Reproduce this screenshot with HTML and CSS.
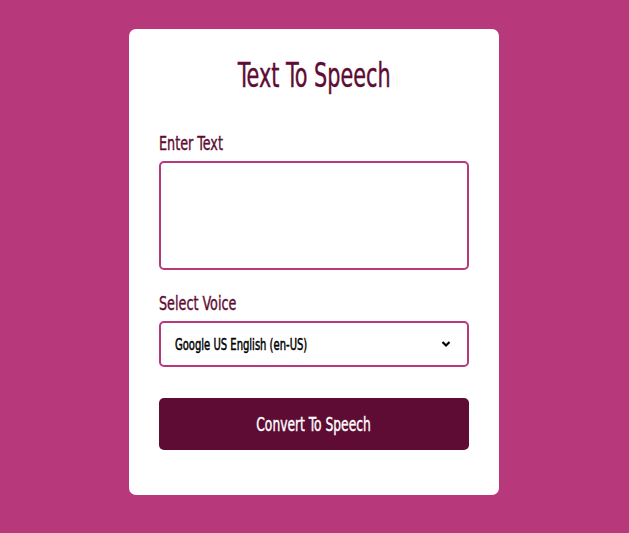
FILE: index.html
```html
<!DOCTYPE html>
<html>
<head>
<meta charset="utf-8">
<link rel="stylesheet" href="styles.css">
</head>
<body>
<div class="card">
  <h1 class="title"><span class="cond cond-center">Text To Speech</span></h1>
  <label class="label"><span class="cond">Enter Text</span></label>
  <textarea class="text"></textarea>
  <label class="label label-voice"><span class="cond">Select Voice</span></label>
  <div class="select">
    <span class="cond cond-select">Google US English (en-US)</span>
    <svg width="10" height="8" viewBox="0 0 10 8"><path d="M1.5 2 L5 5.5 L8.5 2" fill="none" stroke="#000" stroke-width="2.2"/></svg>
  </div>
  <button class="btn"><span class="cond cond-center">Convert To Speech</span></button>
</div>
</body>
</html>
```
FILE: styles.css
```css
html, body { margin: 0; padding: 0; }
body {
  background: #b8397b;
  height: 533px;
  font-family: "DejaVu Sans Condensed", "DejaVu Sans", sans-serif;
}
.cond {
  display: inline-block;
  white-space: nowrap;
  transform: scaleX(0.71);
  transform-origin: left center;
  -webkit-text-stroke: 0.4px currentColor;
}
.cond-center { transform-origin: center center; }
.cond-select { transform: scaleX(0.695); -webkit-text-stroke: 0.5px currentColor; }
.card {
  box-sizing: border-box;
  width: 370px;
  height: 466px;
  margin: 29px 0 0 129px;
  background: #fff;
  border-radius: 7px;
  padding: 30px 30px 0 30px;
  display: flex;
  flex-direction: column;
}
.title {
  margin: 0;
  text-align: center;
  font-weight: normal;
  font-size: 33px;
  line-height: 34px;
  color: #5e0c33;
}
.title .cond { transform: scaleX(0.70); }
.label {
  margin-top: 39px;
  font-size: 20px;
  line-height: 22px;
  color: #5e0c33;
}
.label-voice { margin-top: 22px; }
.text {
  box-sizing: border-box;
  margin-top: 7px;
  width: 310px;
  height: 109px;
  border: 2px solid #b8397b;
  border-radius: 5px;
  resize: none;
  outline: none;
}
.select {
  box-sizing: border-box;
  margin-top: 7px;
  width: 310px;
  height: 46px;
  border: 2px solid #b8397b;
  border-radius: 5px;
  display: flex;
  align-items: center;
  justify-content: space-between;
  padding: 0 16px 0 14px;
  font-size: 16px;
  color: #000;
}
.btn {
  margin-top: 31px;
  width: 310px;
  height: 52px;
  border: none;
  border-radius: 5px;
  background: #5e0c33;
  color: #fff;
  font-family: inherit;
  font-size: 19px;
}
.btn .cond { transform: scaleX(0.72); }
```
